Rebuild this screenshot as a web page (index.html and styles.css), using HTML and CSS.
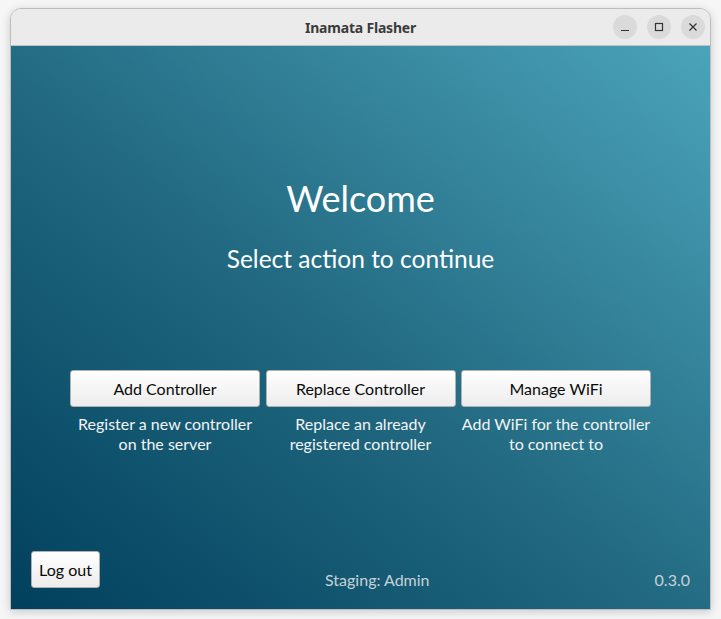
FILE: index.html
```html
<!DOCTYPE html>
<html>
<head>
<meta charset="utf-8">
<link rel="stylesheet" href="styles.css">
</head>
<body>
<div class="window">
  <div class="titlebar">
    <span class="title">Inamata Flasher</span>
    <div class="controls">
      <span class="ctl"><svg width="10" height="10" viewBox="0 0 10 10"><path d="M1 8.5h8" stroke="#333" stroke-width="1.2"/></svg></span>
      <span class="ctl"><svg width="10" height="10" viewBox="0 0 10 10"><rect x="1.5" y="1.5" width="7" height="7" fill="none" stroke="#333" stroke-width="1.2"/></svg></span>
      <span class="ctl"><svg width="10" height="10" viewBox="0 0 10 10"><path d="M1.5 1.5l7 7M8.5 1.5l-7 7" stroke="#333" stroke-width="1.2"/></svg></span>
    </div>
  </div>
  <div class="content">
    <h1 class="welcome">Welcome</h1>
    <p class="subtitle">Select action to continue</p>
    <div class="actions">
      <div class="action">
        <button class="btn wide">Add Controller</button>
        <p class="desc">Register a new controller<br>on the server</p>
      </div>
      <div class="action">
        <button class="btn wide">Replace Controller</button>
        <p class="desc">Replace an already<br>registered controller</p>
      </div>
      <div class="action">
        <button class="btn wide">Manage WiFi</button>
        <p class="desc">Add WiFi for the controller<br>to connect to</p>
      </div>
    </div>
    <div class="footer">
      <button class="btn logout">Log out</button>
      <span class="info">Staging: Admin</span>
      <span class="info">0.3.0</span>
    </div>
  </div>
</div>
</body>
</html>
```
FILE: styles.css
```css
html, body {
  margin: 0;
  padding: 0;
}
body {
  background: #f6f6f6;
  padding: 8px 10px 0 10px;
  height: 619px;
  box-sizing: border-box;
  font-family: Lato, "Noto Sans", sans-serif;
}
.window {
  width: 701px;
  height: 602px;
  box-sizing: border-box;
  border: 1px solid #bdbdbd;
  border-radius: 11px 11px 0 0;
  overflow: hidden;
  display: flex;
  flex-direction: column;
  box-shadow: 0 2px 10px rgba(0,0,0,0.18);
}
.titlebar {
  height: 36px;
  flex: none;
  background: #ebebeb;
  border-bottom: 1px solid #c2c2c2;
  display: flex;
  align-items: center;
  justify-content: center;
  position: relative;
}
.title {
  font-family: "Noto Sans", sans-serif;
  font-weight: 700;
  font-size: 14px;
  color: #3b3b3b;
  letter-spacing: -0.2px;
}
.controls {
  position: absolute;
  right: 5px;
  top: 6px;
  display: flex;
  gap: 10px;
}
.ctl {
  width: 24px;
  height: 24px;
  border-radius: 50%;
  background: #dadada;
  display: flex;
  align-items: center;
  justify-content: center;
}
.content {
  flex: 1;
  background: linear-gradient(to top right, #01405d 0%, #20677f 45%, #4ba4ba 100%);
  display: flex;
  flex-direction: column;
  align-items: center;
}
.welcome {
  margin: 130px 0 0 0;
  font-size: 36px;
  font-weight: 400;
  line-height: 44px;
  color: #ffffff;
}
.subtitle {
  margin: 23px 0 0 0;
  font-size: 24.5px;
  line-height: 32px;
  color: #ffffff;
}
.actions {
  margin-top: 95px;
  display: grid;
  grid-template-columns: 190px 190px 190px;
  column-gap: 5.5px;
}
.action {
  display: flex;
  flex-direction: column;
  align-items: center;
}
.btn {
  font-family: Lato, sans-serif;
  font-size: 16px;
  color: #0a0a0a;
  background: linear-gradient(#ffffff, #ececec);
  border: 1px solid #b0b0b0;
  border-radius: 3px;
  height: 37px;
  padding: 0;
}
.wide {
  width: 190px;
}
.desc {
  margin: 7px 0 0 0;
  font-size: 16px;
  line-height: 20px;
  color: #f2f4f5;
  text-align: center;
}
.footer {
  margin-top: auto;
  align-self: stretch;
  display: flex;
  justify-content: space-between;
  align-items: flex-end;
  padding: 0 20px 19px 20px;
}
.logout {
  width: 69px;
  margin-bottom: 2px;
}
.info {
  font-size: 16px;
  line-height: 20px;
  color: #c6d2d8;
}
```
